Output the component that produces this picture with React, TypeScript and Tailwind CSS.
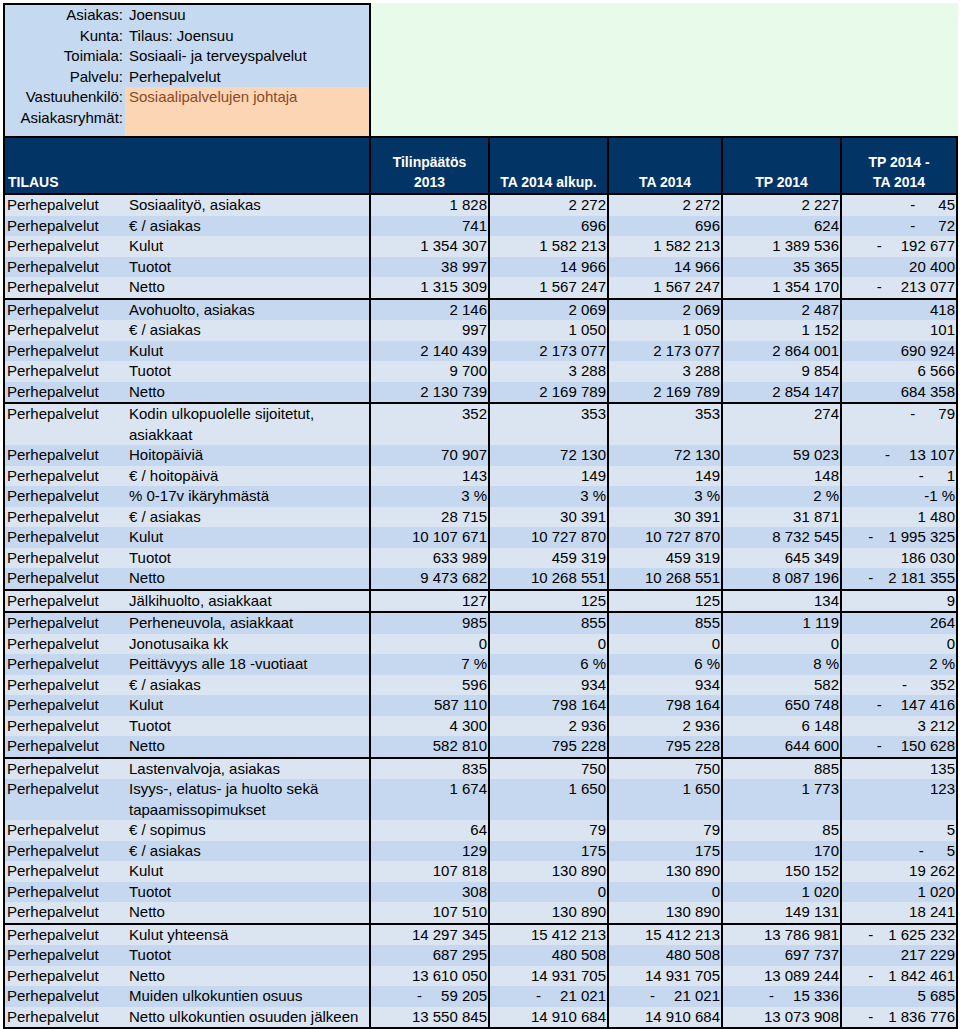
type Row = {
  label: string[]
  values: string[]
  dark?: boolean
}

const groups: Row[][] = [
  [
    { label: ['Sosiaalityö, asiakas'], values: ['1 828', '2 272', '2 272', '2 227', '- 45'] },
    { label: ['€ / asiakas'], values: ['741', '696', '696', '624', '- 72'], dark: true },
    { label: ['Kulut'], values: ['1 354 307', '1 582 213', '1 582 213', '1 389 536', '- 192 677'] },
    { label: ['Tuotot'], values: ['38 997', '14 966', '14 966', '35 365', '20 400'], dark: true },
    { label: ['Netto'], values: ['1 315 309', '1 567 247', '1 567 247', '1 354 170', '- 213 077'] },
  ],
  [
    { label: ['Avohuolto, asiakas'], values: ['2 146', '2 069', '2 069', '2 487', '418'], dark: true },
    { label: ['€ / asiakas'], values: ['997', '1 050', '1 050', '1 152', '101'] },
    { label: ['Kulut'], values: ['2 140 439', '2 173 077', '2 173 077', '2 864 001', '690 924'], dark: true },
    { label: ['Tuotot'], values: ['9 700', '3 288', '3 288', '9 854', '6 566'] },
    { label: ['Netto'], values: ['2 130 739', '2 169 789', '2 169 789', '2 854 147', '684 358'], dark: true },
  ],
  [
    { label: ['Kodin ulkopuolelle sijoitetut,', 'asiakkaat'], values: ['352', '353', '353', '274', '- 79'] },
    { label: ['Hoitopäiviä'], values: ['70 907', '72 130', '72 130', '59 023', '- 13 107'], dark: true },
    { label: ['€ / hoitopäivä'], values: ['143', '149', '149', '148', '- 1'] },
    { label: ['% 0-17v ikäryhmästä'], values: ['3 %', '3 %', '3 %', '2 %', '-1 %'], dark: true },
    { label: ['€ / asiakas'], values: ['28 715', '30 391', '30 391', '31 871', '1 480'] },
    { label: ['Kulut'], values: ['10 107 671', '10 727 870', '10 727 870', '8 732 545', '- 1 995 325'], dark: true },
    { label: ['Tuotot'], values: ['633 989', '459 319', '459 319', '645 349', '186 030'] },
    { label: ['Netto'], values: ['9 473 682', '10 268 551', '10 268 551', '8 087 196', '- 2 181 355'], dark: true },
  ],
  [
    { label: ['Jälkihuolto, asiakkaat'], values: ['127', '125', '125', '134', '9'] },
  ],
  [
    { label: ['Perheneuvola, asiakkaat'], values: ['985', '855', '855', '1 119', '264'], dark: true },
    { label: ['Jonotusaika kk'], values: ['0', '0', '0', '0', '0'] },
    { label: ['Peittävyys alle 18 -vuotiaat'], values: ['7 %', '6 %', '6 %', '8 %', '2 %'], dark: true },
    { label: ['€ / asiakas'], values: ['596', '934', '934', '582', '- 352'] },
    { label: ['Kulut'], values: ['587 110', '798 164', '798 164', '650 748', '- 147 416'], dark: true },
    { label: ['Tuotot'], values: ['4 300', '2 936', '2 936', '6 148', '3 212'] },
    { label: ['Netto'], values: ['582 810', '795 228', '795 228', '644 600', '- 150 628'], dark: true },
  ],
  [
    { label: ['Lastenvalvoja, asiakas'], values: ['835', '750', '750', '885', '135'] },
    { label: ['Isyys-, elatus- ja huolto sekä', 'tapaamissopimukset'], values: ['1 674', '1 650', '1 650', '1 773', '123'], dark: true },
    { label: ['€ / sopimus'], values: ['64', '79', '79', '85', '5'] },
    { label: ['€ / asiakas'], values: ['129', '175', '175', '170', '- 5'], dark: true },
    { label: ['Kulut'], values: ['107 818', '130 890', '130 890', '150 152', '19 262'] },
    { label: ['Tuotot'], values: ['308', '0', '0', '1 020', '1 020'], dark: true },
    { label: ['Netto'], values: ['107 510', '130 890', '130 890', '149 131', '18 241'] },
  ],
  [
    { label: ['Kulut yhteensä'], values: ['14 297 345', '15 412 213', '15 412 213', '13 786 981', '- 1 625 232'] },
    { label: ['Tuotot'], values: ['687 295', '480 508', '480 508', '697 737', '217 229'], dark: true },
    { label: ['Netto'], values: ['13 610 050', '14 931 705', '14 931 705', '13 089 244', '- 1 842 461'] },
    { label: ['Muiden ulkokuntien osuus'], values: ['- 59 205', '- 21 021', '- 21 021', '- 15 336', '5 685'], dark: true },
    { label: ['Netto ulkokuntien osuuden jälkeen'], values: ['13 550 845', '14 910 684', '14 910 684', '13 073 908', '- 1 836 776'] },
  ],
]

const info = [
  { k: 'Asiakas:', v: 'Joensuu' },
  { k: 'Kunta:', v: 'Tilaus: Joensuu' },
  { k: 'Toimiala:', v: 'Sosiaali- ja terveyspalvelut' },
  { k: 'Palvelu:', v: 'Perhepalvelut' },
  { k: 'Vastuuhenkilö:', v: 'Sosiaalipalvelujen johtaja', orange: true },
]

const cols = 'grid grid-cols-[366px_119px_119px_114px_119px_116px]'

function Num({ v }: { v: string }) {
  if (v.startsWith('- ')) {
    const n = v.slice(2)
    const gap = n.length >= 9 ? 'ml-[15px]' : n.length <= 3 ? 'ml-[23px]' : 'ml-[19px]'
    return (
      <span className="flex justify-end">
        <span>-</span>
        <span className={gap}>{n}</span>
      </span>
    )
  }
  return <span>{v}</span>
}

function DataRow({ row }: { row: Row }) {
  const tall = row.label.length > 1
  return (
    <div className={`${cols} ${row.dark ? 'bg-[#c5d8ef]' : 'bg-[#dbe5f1]'} ${tall ? 'h-[41px]' : 'h-[20.5px]'}`}>
      <div className="flex border-r-2 border-black">
        <span className="w-[124px] shrink-0 pl-[2px]">Perhepalvelut</span>
        <span>
          {row.label.map((l) => (
            <div key={l}>{l}</div>
          ))}
        </span>
      </div>
      {row.values.map((v, i) => (
        <div key={i} className="overflow-hidden border-r-2 border-black pr-px text-right">
          <Num v={v} />
        </div>
      ))}
    </div>
  )
}

export default function App() {
  return (
    <div className="min-h-[1029px] w-[960px] bg-white pl-[3px] pt-[3px] font-['Liberation_Sans',Arial,sans-serif] text-[15px] leading-[20.5px] text-black">
      <div className="flex h-[133px] w-[955px]">
        <div className="flex w-[368px] flex-col border-l-2 border-r-2 border-t-2 border-black bg-[#c5d9f0]">
          {info.map((r) => (
            <div key={r.k} className="grid h-[20.5px] grid-cols-[120px_1fr]">
              <div className="pr-[2px] text-right">{r.k}</div>
              <div className={r.orange ? 'bg-[#fcd5b4] pl-[4px] text-[#8a4a2a]' : 'pl-[4px]'}>{r.v}</div>
            </div>
          ))}
          <div className="grid flex-1 grid-cols-[120px_1fr]">
            <div className="pr-[2px] text-right">Asiakasryhmät:</div>
            <div className="bg-[#fcd5b4]"></div>
          </div>
        </div>
        <div className="flex-1 bg-[#e8fbea]"></div>
      </div>

      <div className="w-[955px] border-l-2 border-black">
        <div className={`${cols} h-[59px] border-b-2 border-t-2 border-black bg-[#033466] text-[14px] font-bold leading-[20px] text-white`}>
          <div className="flex items-end border-r-2 border-black pb-[1px] pl-[3px]">TILAUS</div>
          <div className="flex flex-col items-center justify-end border-r-2 border-black pb-[1px]">
            <span>Tilinpäätös</span>
            <span>2013</span>
          </div>
          <div className="flex items-end justify-center border-r-2 border-black pb-[1px]">TA 2014 alkup.</div>
          <div className="flex items-end justify-center border-r-2 border-black pb-[1px]">TA 2014</div>
          <div className="flex items-end justify-center border-r-2 border-black pb-[1px]">TP 2014</div>
          <div className="flex flex-col items-center justify-end border-r-2 border-black pb-[1px]">
            <span>TP 2014 -</span>
            <span>TA 2014</span>
          </div>
        </div>

        {groups.map((g, gi) => (
          <div key={gi} className="border-b-2 border-black">
            {g.map((row, ri) => (
              <DataRow key={ri} row={row} />
            ))}
          </div>
        ))}
      </div>
    </div>
  )
}
